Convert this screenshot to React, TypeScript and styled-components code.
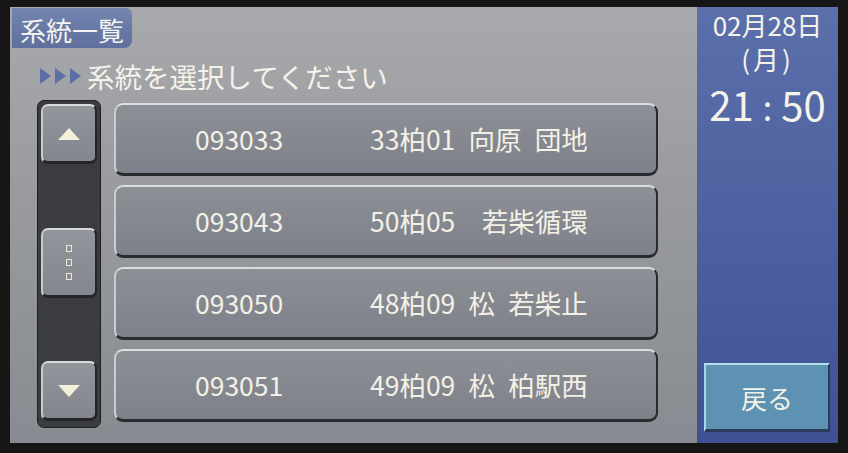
import React from 'react';
import styled, { createGlobalStyle } from 'styled-components';

const GlobalStyle = createGlobalStyle`
  html, body {
    margin: 0;
    padding: 0;
    background: #161617;
  }
  body {
    width: 848px;
    height: 453px;
    overflow: hidden;
    font-family: "Noto Sans CJK JP", "Noto Sans", sans-serif;
  }
`;

const Bezel = styled.div`
  width: 848px;
  height: 453px;
  box-sizing: border-box;
  padding: 7px 10px 10px 10px;
  background: #161617;
`;

const Screen = styled.div`
  display: flex;
  width: 828px;
  height: 436px;
`;

const MainPanel = styled.div`
  width: 687px;
  display: flex;
  flex-direction: column;
  background: linear-gradient(180deg, #a8a9ac 0%, #989a9e 45%, #888b91 100%);
`;

const TitleTab = styled.div`
  align-self: flex-start;
  box-sizing: border-box;
  margin: 1px 0 0 2px;
  width: 120px;
  height: 40px;
  padding-top: 3px;
  background: linear-gradient(180deg, #7585b0, #5f6f9e);
  border-radius: 0 6px 8px 0;
  color: #f4f4f0;
  font-size: 26px;
  line-height: 37px;
  text-align: center;
`;

const Prompt = styled.div`
  display: flex;
  align-items: center;
  gap: 6px;
  height: 30px;
  margin: 13px 0 0 30px;
  color: #f5f3ea;
  font-size: 27.5px;
  line-height: 30px;
`;

const Arrows = styled.div`
  display: flex;
  gap: 4px;
`;

const Arrow = styled.span`
  width: 0;
  height: 0;
  border-top: 8px solid transparent;
  border-bottom: 8px solid transparent;
  border-left: 11px solid #5b6ea6;
`;

const Content = styled.div`
  display: flex;
  gap: 13px;
  margin: 9px 0 0 27px;
`;

const Track = styled.div`
  box-sizing: border-box;
  width: 64px;
  height: 328px;
  padding: 3px 4px 6px;
  display: flex;
  flex-direction: column;
  justify-content: space-between;
  align-items: center;
  background: #3b3c3f;
  border: 1px solid #1e1f21;
  border-radius: 7px;
`;

const ScrollButton = styled.div<{ $h: number }>`
  box-sizing: border-box;
  width: 56px;
  height: ${({ $h }) => $h}px;
  display: flex;
  flex-direction: column;
  align-items: center;
  justify-content: center;
  gap: 7px;
  background: linear-gradient(180deg, #92959b, #83868d);
  border-top: 2px solid #d9dadc;
  border-left: 2px solid #c9cacd;
  border-right: 2px solid #242528;
  border-bottom: 3px solid #242528;
  border-radius: 7px;
`;

const Tri = styled.span<{ $up: boolean }>`
  width: 0;
  height: 0;
  border-left: 11px solid transparent;
  border-right: 11px solid transparent;
  ${({ $up }) =>
    $up ? 'border-bottom: 12px solid #f3efd8;' : 'border-top: 12px solid #f3efd8;'}
`;

const Dot = styled.span`
  width: 4px;
  height: 5px;
  border: 1.5px solid #ece8d4;
`;

const List = styled.div`
  margin-top: 3px;
  display: flex;
  flex-direction: column;
  gap: 9px;
`;

const RouteRow = styled.div`
  box-sizing: border-box;
  width: 544px;
  height: 73px;
  display: grid;
  grid-template-columns: 175px 1fr;
  align-items: center;
  padding-left: 79px;
  background: linear-gradient(180deg, #8c8f96, #7e8189);
  border-top: 2px solid #dcdddf;
  border-left: 2px solid #cbccce;
  border-right: 2px solid #2a2b2f;
  border-bottom: 3px solid #2a2b2f;
  border-radius: 9px;
  color: #f3f1e6;
  font-size: 26.5px;
  line-height: 30px;
  white-space: pre;
`;

const SidePanel = styled.div`
  width: 141px;
  display: flex;
  flex-direction: column;
  align-items: center;
  background: linear-gradient(180deg, #5b6fab 0%, #4d61a0 50%, #3f5190 100%);
  color: #f5f3ea;
`;

const DateLine = styled.div`
  margin-top: 1px;
  font-size: 26px;
  line-height: 34px;
`;

const Weekday = styled.div`
  font-size: 26px;
  line-height: 34px;
  letter-spacing: 3px;
`;

const Clock = styled.div`
  font-size: 40px;
  line-height: 56px;
`;

const Colon = styled.span`
  padding: 0 9px;
  font-size: 34px;
`;

const BackButton = styled.div`
  box-sizing: border-box;
  margin: auto 8px 11px 7px;
  width: 126px;
  height: 69px;
  display: flex;
  align-items: center;
  justify-content: center;
  background: #5e92b2;
  border-top: 2px solid #b4e0ee;
  border-left: 2px solid #a8d6e6;
  border-right: 2px solid #2a3b5c;
  border-bottom: 3px solid #2a3b5c;
  color: #f3f1e6;
  font-size: 26px;
`;

const routes = [
  { code: '093033', name: '33柏01\u2002向原\u2002団地' },
  { code: '093043', name: '50柏05\u3000若柴循環' },
  { code: '093050', name: '48柏09\u2002松\u2002若柴止' },
  { code: '093051', name: '49柏09\u2002松\u2002柏駅西' },
];

export default function App() {
  return (
    <>
      <GlobalStyle />
      <Bezel>
        <Screen>
          <MainPanel>
            <TitleTab>系統一覧</TitleTab>
            <Prompt>
              <Arrows>
                <Arrow />
                <Arrow />
                <Arrow />
              </Arrows>
              系統を選択してください
            </Prompt>
            <Content>
              <Track>
                <ScrollButton $h={60}>
                  <Tri $up />
                </ScrollButton>
                <ScrollButton $h={70}>
                  <Dot />
                  <Dot />
                  <Dot />
                </ScrollButton>
                <ScrollButton $h={60}>
                  <Tri $up={false} />
                </ScrollButton>
              </Track>
              <List>
                {routes.map((r) => (
                  <RouteRow key={r.code}>
                    <span>{r.code}</span>
                    <span>{r.name}</span>
                  </RouteRow>
                ))}
              </List>
            </Content>
          </MainPanel>
          <SidePanel>
            <DateLine>02月28日</DateLine>
            <Weekday>(月)</Weekday>
            <Clock>
              21<Colon>:</Colon>50
            </Clock>
            <BackButton>戻る</BackButton>
          </SidePanel>
        </Screen>
      </Bezel>
    </>
  );
}
